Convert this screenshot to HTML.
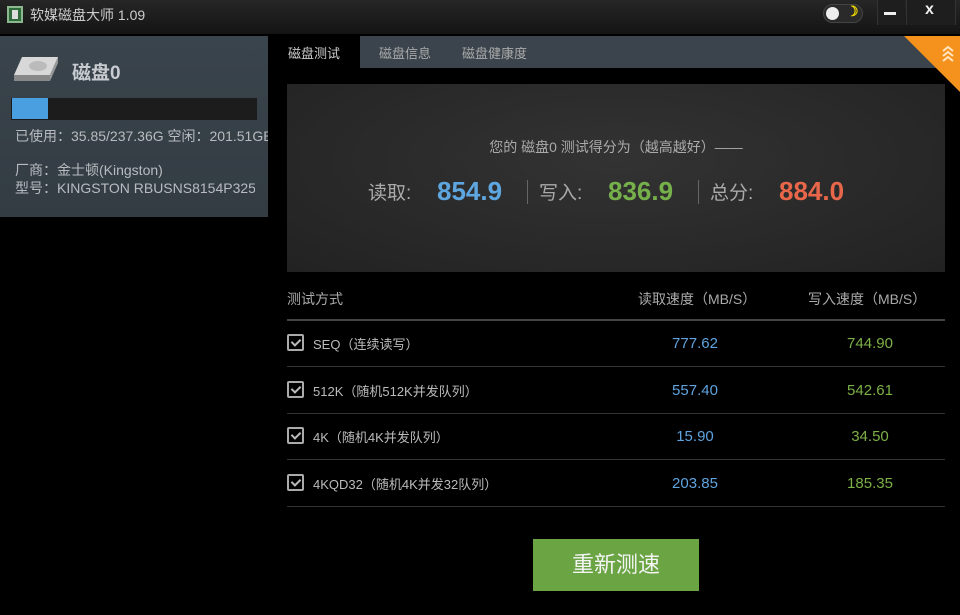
<!DOCTYPE html>
<html><head><meta charset="utf-8"><style>
*{margin:0;padding:0;box-sizing:border-box}
body{width:960px;height:615px;background:#000;overflow:hidden;position:relative;font-family:"Liberation Sans","Noto Sans CJK SC",sans-serif;color:#bbb}
.a{position:absolute}
.title{left:0;top:0;width:960px;height:34px;background:linear-gradient(#262626,#141414)}
.row{left:287px;width:658px;height:1px;background:#333}
.cb{position:absolute;left:287px;width:17px;height:17px;border:2px solid #aaa;border-radius:2px}
.cb:after{content:"";position:absolute;left:4px;top:1px;width:4px;height:7px;border-right:2px solid #bbb;border-bottom:2px solid #bbb;transform:rotate(45deg)}
.lab{left:313px;font-size:13px;color:#bbb}
.r{font-size:15px;color:#5fa3df;width:100px;text-align:center;left:645px}
.w{font-size:15px;color:#7db046;width:100px;text-align:center;left:820px}
</style></head><body>
<div class="a title"></div>
<div class="a" style="left:7px;top:6px;width:16px;height:17px;background:#2f6b3a;border:2px solid #8cb88f"><div style="margin:2px 3px;width:6px;height:9px;background:#ddd"></div></div>
<div class="a" style="left:30px;top:5px;font-size:14px;color:#ccc">软媒磁盘大师 1.09</div>
<div class="a" style="left:823px;top:4px;width:40px;height:19px;border-radius:10px;background:#2a2a2a;border:1px solid #444"></div>
<div class="a" style="left:826px;top:7px;width:13px;height:13px;border-radius:50%;background:#eee"></div>
<div class="a" style="left:846px;top:3px;font-size:14px;font-weight:bold;color:#f0d800">☽</div>
<div class="a" style="left:877px;top:0;width:28px;height:25px;background:#1e1e1e;border-left:1px solid #333"></div>
<div class="a" style="left:906px;top:0;width:50px;height:25px;background:#1e1e1e;border-left:1px solid #333;border-right:1px solid #333"></div>
<div class="a" style="left:884px;top:12px;width:12px;height:3px;background:#eee"></div>
<div class="a" style="left:925px;top:1px;font-size:16px;font-weight:bold;color:#eee">x</div>

<div class="a" style="left:0;top:36px;width:268px;height:181px;background:linear-gradient(#3a444c,#333c43)"></div>
<svg class="a" style="left:14px;top:55px" width="46" height="28"><path d="M8 2h36l-8 18H0z" fill="#d8d8d8"/><path d="M0 20h36v6H0z" fill="#888"/><path d="M36 20l8-18v6l-8 18z" fill="#999"/><ellipse cx="24" cy="11" rx="9" ry="5" fill="#bbb"/></svg>
<div class="a" style="left:72px;top:58px;font-size:19px;font-weight:bold;color:#c8ccd0">磁盘0</div>
<div class="a" style="left:11px;top:98px;width:246px;height:22px;background:#1c1c1c"></div>
<div class="a" style="left:12px;top:98px;width:36px;height:21px;background:#4a9fe0"></div>
<div class="a" style="left:15px;top:126px;font-size:14px;color:#b8bcc0;white-space:nowrap;width:253px;overflow:hidden">已使用：35.85/237.36G 空闲：201.51GB</div>
<div class="a" style="left:15px;top:160px;font-size:14px;color:#b8bcc0">厂商：金士顿(Kingston)</div>
<div class="a" style="left:15px;top:178px;font-size:14px;color:#b8bcc0;white-space:nowrap;width:240px;overflow:hidden">型号：KINGSTON RBUSNS8154P325</div>

<div class="a" style="left:270px;top:36px;width:690px;height:32px;background:#3b444c"></div>
<div class="a" style="left:270px;top:36px;width:90px;height:32px;background:#000"></div>
<div class="a" style="left:288px;top:43px;font-size:13px;color:#ccc">磁盘测试</div>
<div class="a" style="left:379px;top:43px;font-size:13px;color:#aaa">磁盘信息</div>
<div class="a" style="left:462px;top:43px;font-size:13px;color:#aaa">磁盘健康度</div>
<svg class="a" style="left:904px;top:36px" width="56" height="56"><path d="M0 0h56v56z" fill="#f5921e"/><path d="M39 15l5-4 5 4M39 20l5-4 5 4M39 25l5-4 5 4" stroke="#ffe6c0" stroke-width="2" fill="none"/></svg>

<div class="a" style="left:287px;top:84px;width:658px;height:188px;background:radial-gradient(ellipse at 50% 40%,#333,#222)"></div>
<div class="a" style="left:287px;top:137px;width:658px;text-align:center;font-size:14px;color:#aaa">您的 磁盘0 测试得分为（越高越好）——</div>
<div class="a" style="left:368px;top:178px;font-size:19px;color:#aaa">读取:</div>
<div class="a" style="left:437px;top:176px;font-size:26px;font-weight:bold;color:#5ea6e0">854.9</div>
<div class="a" style="left:527px;top:180px;width:1px;height:24px;background:#666"></div>
<div class="a" style="left:539px;top:178px;font-size:19px;color:#aaa">写入:</div>
<div class="a" style="left:608px;top:176px;font-size:26px;font-weight:bold;color:#76b04a">836.9</div>
<div class="a" style="left:698px;top:180px;width:1px;height:24px;background:#666"></div>
<div class="a" style="left:710px;top:178px;font-size:19px;color:#aaa">总分:</div>
<div class="a" style="left:779px;top:176px;font-size:26px;font-weight:bold;color:#e8664a">884.0</div>

<div class="a" style="left:287px;top:289px;font-size:14px;color:#aaa">测试方式</div>
<div class="a" style="left:638px;top:289px;font-size:14px;color:#aaa">读取速度（MB/S）</div>
<div class="a" style="left:808px;top:289px;font-size:14px;color:#aaa">写入速度（MB/S）</div>
<div class="a row" style="top:319px;height:2px;background:#444"></div>
<div class="cb" style="top:334px"></div><div class="a lab" style="top:334px">SEQ（连续读写）</div><div class="a r" style="top:335px">777.62</div><div class="a w" style="top:335px">744.90</div>
<div class="a row" style="top:366px"></div>
<div class="cb" style="top:381px"></div><div class="a lab" style="top:381px">512K（随机512K并发队列）</div><div class="a r" style="top:382px">557.40</div><div class="a w" style="top:382px">542.61</div>
<div class="a row" style="top:413px"></div>
<div class="cb" style="top:427px"></div><div class="a lab" style="top:427px">4K（随机4K并发队列）</div><div class="a r" style="top:428px">15.90</div><div class="a w" style="top:428px">34.50</div>
<div class="a row" style="top:459px"></div>
<div class="cb" style="top:474px"></div><div class="a lab" style="top:474px">4KQD32（随机4K并发32队列）</div><div class="a r" style="top:475px">203.85</div><div class="a w" style="top:475px">185.35</div>
<div class="a row" style="top:506px"></div>

<div class="a" style="left:533px;top:539px;width:166px;height:52px;background:#6aa443;color:#f4f4f4;font-size:22px;text-align:center;line-height:52px">重新测速</div>
</body></html>
